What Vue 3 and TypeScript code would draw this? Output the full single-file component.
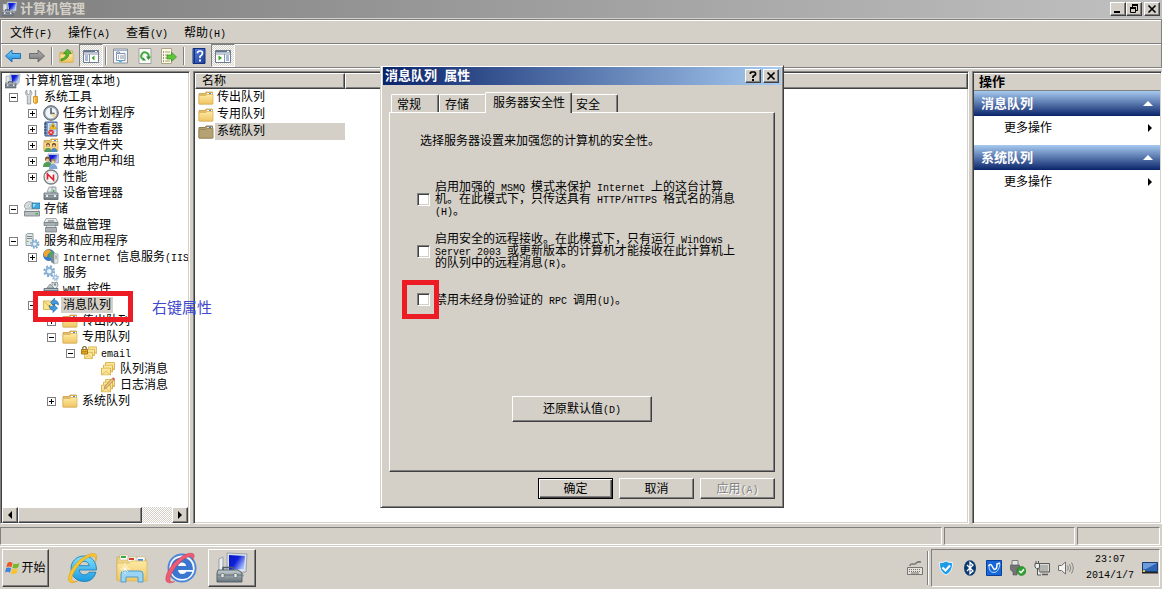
<script setup lang="ts">
import { computed, h, ref, type FunctionalComponent } from 'vue'

interface TreeNode {
  id: string
  level: number
  label: string
  icon: string
  branch?: boolean
}

// Splits a label so that Latin runs can be set in a half-width face
const Mix: FunctionalComponent<{ text: string }> = (props) =>
  h(
    'span',
    { class: 'mix' },
    (props.text.match(/[\x20-\x7e]+|[^\x20-\x7e]+/g) ?? []).map((part) =>
      /^[\x20-\x7e]/.test(part) ? h('span', { class: 'half' }, part) : part,
    ),
  )
Mix.props = ['text']

const Icon: FunctionalComponent<{ name: string; size?: number }> = (props) =>
  h(
    'svg',
    { class: 'icon', width: props.size ?? 16, height: props.size ?? 16, 'aria-hidden': 'true' },
    [h('use', { href: '#i-' + props.name })],
  )
Icon.props = ['name', 'size']

const menus = ['文件(F)', '操作(A)', '查看(V)', '帮助(H)']

const tools = [
  [
    { icon: 'back', label: '后退' },
    { icon: 'forward', label: '前进' },
  ],
  [
    { icon: 'up', label: '向上' },
    { icon: 'panel-left', label: '控制台树', pressed: true },
  ],
  [
    { icon: 'props', label: '属性' },
    { icon: 'refresh', label: '刷新' },
    { icon: 'export', label: '导出' },
  ],
  [
    { icon: 'help', label: '帮助' },
    { icon: 'panel-right', label: '操作窗格', pressed: true },
  ],
]

const nodes: TreeNode[] = [
  { id: 'root', level: 0, label: '计算机管理(本地)', icon: 'computer' },
  { id: 'sys', level: 1, label: '系统工具', icon: 'wrench', branch: true },
  { id: 'task', level: 2, label: '任务计划程序', icon: 'clock', branch: true },
  { id: 'event', level: 2, label: '事件查看器', icon: 'event', branch: true },
  { id: 'share', level: 2, label: '共享文件夹', icon: 'share', branch: true },
  { id: 'users', level: 2, label: '本地用户和组', icon: 'users', branch: true },
  { id: 'perf', level: 2, label: '性能', icon: 'perf', branch: true },
  { id: 'device', level: 2, label: '设备管理器', icon: 'device' },
  { id: 'store', level: 1, label: '存储', icon: 'storage', branch: true },
  { id: 'disk', level: 2, label: '磁盘管理', icon: 'disk' },
  { id: 'svcapp', level: 1, label: '服务和应用程序', icon: 'server', branch: true },
  { id: 'iis', level: 2, label: 'Internet 信息服务(IIS', icon: 'iis', branch: true },
  { id: 'svc', level: 2, label: '服务', icon: 'gears' },
  { id: 'wmi', level: 2, label: 'WMI 控件', icon: 'wmi' },
  { id: 'mq', level: 2, label: '消息队列', icon: 'queue', branch: true },
  { id: 'out', level: 3, label: '传出队列', icon: 'folder', branch: true },
  { id: 'priv', level: 3, label: '专用队列', icon: 'folder', branch: true },
  { id: 'email', level: 4, label: 'email', icon: 'lockmail', branch: true },
  { id: 'qmsg', level: 5, label: '队列消息', icon: 'mails' },
  { id: 'jmsg', level: 5, label: '日志消息', icon: 'journal' },
  { id: 'sysq', level: 3, label: '系统队列', icon: 'folder', branch: true },
]

const open = ref(new Set(['sys', 'store', 'svcapp', 'mq', 'priv', 'email']))
const selectedNode = ref('mq')

const visibleNodes = computed(() => {
  const shown: TreeNode[] = []
  let closedAt = Infinity
  for (const node of nodes) {
    if (node.level > closedAt) continue
    closedAt = node.branch && !open.value.has(node.id) ? node.level : Infinity
    shown.push(node)
  }
  return shown
})

function toggle(id: string) {
  const next = new Set(open.value)
  if (!next.delete(id)) next.add(id)
  open.value = next
}

const queues = ['传出队列', '专用队列', '系统队列']
const selectedQueue = ref('系统队列')

const actionGroups = ['消息队列', '系统队列']

const tabs = ['常规', '存储', '服务器安全性', '安全']
const activeTab = ref('服务器安全性')

const options = ref([
  {
    id: 'harden',
    on: false,
    lines: ['启用加强的 MSMQ 模式来保护 Internet 上的这台计算', '机。在此模式下，只传送具有 HTTP/HTTPS 格式名的消息', '(H)。'],
  },
  {
    id: 'remote',
    on: false,
    lines: ['启用安全的远程接收。在此模式下，只有运行 Windows', 'Server 2003 或更新版本的计算机才能接收在此计算机上', '的队列中的远程消息(R)。'],
  },
  { id: 'rpc', on: false, lines: ['禁用未经身份验证的 RPC 调用(U)。'] },
])

const trayIcons = ['shield', 'bluetooth', 'sync', 'usb', 'network', 'sound']
</script>

<template>
  <div class="desktop">
    <svg class="sprite" aria-hidden="true">
      <defs>
        <linearGradient id="g-folder" x1="0" y1="0" x2="0" y2="1"><stop offset="0" stop-color="#fdeaa4" /><stop offset="1" stop-color="#f0c562" /></linearGradient>
        <linearGradient id="g-screen" x1="0" y1="0" x2="1" y2="0.6"><stop offset="0" stop-color="#0a18c8" /><stop offset="0.5" stop-color="#1020d8" /><stop offset="1" stop-color="#a8c0ff" /></linearGradient>
        <linearGradient id="g-blue" x1="0" y1="0" x2="0" y2="1"><stop offset="0" stop-color="#7fd4fa" /><stop offset="1" stop-color="#1a86d8" /></linearGradient>
        <linearGradient id="g-gray" x1="0" y1="0" x2="0" y2="1"><stop offset="0" stop-color="#b4b4b4" /><stop offset="1" stop-color="#747474" /></linearGradient>
        <linearGradient id="g-metal" x1="0" y1="0" x2="0" y2="1"><stop offset="0" stop-color="#c6ced2" /><stop offset="1" stop-color="#66727a" /></linearGradient>
        <linearGradient id="g-help" x1="0" y1="0" x2="1" y2="1"><stop offset="0" stop-color="#5a86e0" /><stop offset="1" stop-color="#1a3a9c" /></linearGradient>
        <linearGradient id="g-ie" x1="0" y1="0" x2="0" y2="1"><stop offset="0" stop-color="#7fe0fc" /><stop offset="1" stop-color="#1c9ae0" /></linearGradient>
      </defs>

      <symbol id="i-folder" viewBox="0 0 16 16">
        <path d="M1 3.5h6l1-1.500h6.500v12H1z" fill="#e2bb62" stroke="#c9a04c" stroke-width=".8" />
        <path d="M9 3h5v2H9z" fill="#fff" /><path d="M11 3h2v1h-2z" fill="#3a8ad8" />
        <path d="M1 5.500h7l1-1h6v9.500H1z" fill="url(#g-folder)" stroke="#dcb45c" stroke-width=".8" />
      </symbol>
      <symbol id="i-folder-dim" viewBox="0 0 16 16">
        <path d="M1 3.500h6l1-1.500h6.500v12H1z" fill="#b09c6c" stroke="#8e7c50" />
        <path d="M9 3h5v2H9z" fill="#ddd" /><path d="M11 3h2v1h-2z" fill="#3a7ab8" />
        <path d="M1 5.500h7l1-1h6v9.500H1z" fill="#b5a272" stroke="#9a875a" />
      </symbol>
      <symbol id="i-computer" viewBox="0 0 16 16">
        <path d="M1 3h4v9H1z" fill="#dfe4e4" stroke="#8c9698" stroke-width=".6" />
        <path d="M5 1h10l-1 9H6z" fill="#d8dde6" stroke="#98a0ac" stroke-width=".7" />
        <path d="M6.200 2h7.700l-.8 6.800H7z" fill="url(#g-screen)" />
        <path d="M8 10h4l1 2H8z" fill="#aab2b8" />
        <path d="M0 10h11v5H0z" fill="url(#g-metal)" stroke="#59646a" stroke-width=".6" />
        <path d="M3.500 10V8.700h4V10M0 12h11" fill="none" stroke="#445" stroke-width=".8" />
        <path d="M2 11.500h1.400v1.400H2zM8 11.500h1.400v1.400H8z" fill="#eef" />
      </symbol>
      <symbol id="i-wrench" viewBox="0 0 16 16">
        <path d="M3 1v3.500L4.500 5.500 6 4.500V1c2 1 2.600 4 .7 5.800V15H3.300V7C.8 5 1.200 2 3 1z" fill="#d4d8da" stroke="#7e878b" stroke-width=".7" />
        <path d="M10.800 1h1.400v6.500h-1.400z" fill="#999" />
        <path d="M9.500 7.500h4v6q-2 2.500-4 0z" fill="#f4b22a" stroke="#c27c10" stroke-width=".7" /><path d="M10.500 8.500v5" stroke="#ffe48c" />
      </symbol>
      <symbol id="i-clock" viewBox="0 0 16 16">
        <circle cx="8" cy="8" r="7.300" fill="#9aa2aa" stroke="#596470" /><circle cx="8" cy="8" r="5.600" fill="#eef4fb" />
        <path d="M8 3v5.500h3.500" fill="none" stroke="#333b48" stroke-width="1.300" /><path d="M8 8.500l5 .5a5 5 0 0 1-3 3.800z" fill="#f4d79c" />
      </symbol>
      <symbol id="i-event" viewBox="0 0 16 16">
        <path d="M2 1h12v14H2z" fill="#7c9cd0" stroke="#415c92" /><path d="M5 2h8.500v12H5z" fill="#d5e2f5" />
        <path d="M6 4h6M6 6h6M6 8h6M6 10h6" stroke="#8ea9d5" stroke-width=".8" />
        <path d="M1 3h2.500M1 6h2.500M1 9h2.500M1 12h2.500" stroke="#333" />
        <path d="M10 2l3.500 6h-7z" fill="#ffc91c" stroke="#b78300" stroke-width=".5" /><path d="M10 4v2.500" stroke="#333" stroke-width=".9" />
        <circle cx="8" cy="11.500" r="2.800" fill="#dc3030" /><path d="M7 10.500l2 2m0-2l-2 2" stroke="#fff" stroke-width=".9" />
      </symbol>
      <symbol id="i-share" viewBox="0 0 16 16">
        <use href="#i-folder" />
        <circle cx="5" cy="8" r="2" fill="#7b4a22" /><circle cx="11" cy="8" r="2" fill="#5c3518" /><circle cx="5" cy="8.700" r="1.300" fill="#efc296" /><circle cx="11" cy="8.700" r="1.300" fill="#efc296" />
        <path d="M1.500 15q0-4 3.500-4t3.500 4z" fill="#4d9c64" /><path d="M8 15q0-4 3-4t3.500 4z" fill="#4d87c2" />
      </symbol>
      <symbol id="i-users" viewBox="0 0 16 16">
        <path d="M5 1h10.500v9H6z" fill="#ccd6ec" stroke="#8493b6" stroke-width=".7" /><path d="M6 2h8.500v7H7z" fill="url(#g-screen)" />
        <circle cx="4.500" cy="6" r="2.500" fill="#7b5128" /><circle cx="4.500" cy="7" r="1.600" fill="#efc296" /><circle cx="10" cy="8" r="2.300" fill="#b07a34" /><circle cx="10" cy="9" r="1.500" fill="#f2cda2" />
        <path d="M0 14q0-5 4.500-5T9 14z" fill="#4f9d55" /><path d="M6 16q0-5 4-5t4.500 5z" fill="#7fa6d6" />
      </symbol>
      <symbol id="i-perf" viewBox="0 0 16 16">
        <circle cx="8" cy="8" r="7" fill="#fff" stroke="#777f84" stroke-width="1.300" /><circle cx="8" cy="8" r="5.300" fill="none" stroke="#c8cdd0" stroke-width=".7" />
        <path d="M4.500 10.500V5l6 6V5.500" fill="none" stroke="#e0202c" stroke-width="1.700" />
      </symbol>
      <symbol id="i-device" viewBox="0 0 16 16">
        <path d="M4 7l2-5h5l2 5z" fill="#e3e8e9" stroke="#8a9498" stroke-width=".7" /><path d="M9 2h4v6H9z" fill="#d6dcde" stroke="#7d888c" stroke-width=".7" /><path d="M10 5h1.500v2H10z" fill="#3eb54a" />
        <path d="M1 8h14v6.500H1z" fill="url(#g-metal)" stroke="#59646a" stroke-width=".8" /><path d="M1 10.500h14" stroke="#6a757b" stroke-width=".7" /><path d="M3 10h2v2H3zm8 0h2v2h-2z" fill="#e5eaec" />
      </symbol>
      <symbol id="i-storage" viewBox="0 0 16 16">
        <ellipse cx="5.500" cy="5" rx="5" ry="4.300" fill="#d9dfe1" stroke="#8a9498" stroke-width=".8" /><circle cx="5.500" cy="5" r="1.300" fill="#fff" stroke="#999" stroke-width=".6" />
        <path d="M8 2h8v5.500H8z" fill="#3fa8dc" stroke="#23749c" stroke-width=".7" /><path d="M9 3h3l-2 3H9z" fill="#9fdcf6" />
        <path d="M2 8h12l1.500 2.500H.5z" fill="#eef0f0" stroke="#868f93" stroke-width=".6" /><path d="M.5 10.500h15V15H.5z" fill="#b8bec1" stroke="#717a7e" stroke-width=".8" /><path d="M11.500 12h2.500v1.500h-2.500z" fill="#3eb54a" />
      </symbol>
      <symbol id="i-disk" viewBox="0 0 16 16">
        <path d="M3 1.500h10l2 4H1z" fill="#e6e9ea" stroke="#8a9296" stroke-width=".7" /><path d="M1 5.500h14v3H1z" fill="#a9b1b5" stroke="#6d767b" stroke-width=".7" /><path d="M12 7h1.500" stroke="#3eb54a" />
        <path d="M4 8.500h8l1 2H3z" fill="#dfe3e4" stroke="#8a9296" stroke-width=".6" /><path d="M2.500 10.500h11V15h-11z" fill="#a9b1b5" stroke="#6d767b" stroke-width=".7" /><path d="M5 4h6" stroke="#777" />
      </symbol>
      <symbol id="i-gear-shape" viewBox="0 0 12 12">
        <circle cx="6" cy="6" r="4.700" fill="none" stroke="#7fa9cf" stroke-width="2" stroke-dasharray="2 1.700" /><circle cx="6" cy="6" r="3.100" fill="#eaf3fb" stroke="#8ab0d4" stroke-width="1.800" />
      </symbol>
      <symbol id="i-server" viewBox="0 0 16 16">
        <path d="M2 1.500L4 .5h5v12H2z" fill="#e2e6e7" stroke="#808b90" stroke-width=".8" /><path d="M3 3.500h5M3 5.500h5" stroke="#7c878d" /><path d="M3 8h1.500v1H3z" fill="#3eb54a" />
        <use href="#i-gear-shape" x="5.500" y="6" width="10.500" height="10" />
      </symbol>
      <symbol id="i-gears" viewBox="0 0 16 16">
        <use href="#i-gear-shape" x="0" y="0" width="12.500" height="12.500" /><use href="#i-gear-shape" x="9" y="9" width="7" height="7" />
      </symbol>
      <symbol id="i-iis" viewBox="0 0 16 16">
        <circle cx="6" cy="6" r="5.600" fill="#2f7cd0" stroke="#1c569c" stroke-width=".6" /><path d="M.5 4Q2.500.5 6 .5l2.500 2L5 5 4 8 1 7.500z" fill="#f2a431" /><path d="M6 4l4-2q1 4-2 7.500L6 8z" fill="#46ac48" />
        <path d="M8 5l3-1v11l-3-2z" fill="#7d888e" /><path d="M11 4l4 1v9l-4 1z" fill="#dfe4e5" stroke="#899397" stroke-width=".5" /><path d="M12 7l2 .3M12 9l2 .2" stroke="#6d777b" stroke-width=".7" />
      </symbol>
      <symbol id="i-wmi" viewBox="0 0 16 16">
        <path d="M9 1l2 1 3-1 1 3-2 4H9z" fill="#e9eced" stroke="#727c81" stroke-width=".8" /><circle cx="12" cy="3.500" r="1.200" fill="#808b90" />
        <path d="M4 7l3-4 4 4z" fill="#bfc7ca" stroke="#727c81" stroke-width=".7" /><path d="M1 7.500h14V14H1z" fill="url(#g-metal)" stroke="#59646a" stroke-width=".8" /><path d="M1 10h14" stroke="#454f55" /><path d="M10 9h3v3h-3z" fill="#3f8fd4" />
      </symbol>
      <symbol id="i-queue" viewBox="0 0 16 16">
        <path d="M.5 4h11v8.500H.5z" fill="#fbe38c" stroke="#dcb858" /><path d="M.5 4l5.500 5 5.500-5" fill="none" stroke="#dcb858" />
        <path d="M7.500 5.500l4-4.500v2.500q4 0 4 4.500-1.500-1.500-4-1.300V9.500z" fill="#3f9ae0" stroke="#1a5ea0" stroke-width=".6" /><path d="M14.500 11l-4.500 4.500V13q-3.500 0-4-4.500 1.500 1.500 4 1.300V7z" fill="#3f9ae0" stroke="#1a5ea0" stroke-width=".6" />
      </symbol>
      <symbol id="i-env" viewBox="0 0 10 8">
        <path d="M.5 .5h9v7h-9z" fill="#fbe596" stroke="#d8b04c" stroke-width=".9" /><path d="M.5 7.500L5 3.800l4.500 3.700" fill="none" stroke="#dcb858" stroke-width=".8" />
      </symbol>
      <symbol id="i-mails" viewBox="0 0 16 16">
        <use href="#i-env" x="5" y="1" width="10" height="8" /><use href="#i-env" x="3" y="3.500" width="10" height="8" /><use href="#i-env" x="1" y="6.500" width="10" height="8" />
      </symbol>
      <symbol id="i-journal" viewBox="0 0 16 16">
        <use href="#i-mails" y="1" width="16" height="16" /><path d="M5 9l7-7.500 2 1.500-7 7.500-2.800 1z" fill="#f0c078" stroke="#8c7448" stroke-width=".6" /><path d="M12 1.500L13.200.3l2 1.600L14 3z" fill="#d25a5a" />
      </symbol>
      <symbol id="i-lockmail" viewBox="0 0 16 16">
        <use href="#i-env" x="7" y="1" width="9" height="8" /><use href="#i-env" x="5" y="3.500" width="9" height="8" /><use href="#i-env" x="3" y="6.500" width="9" height="8" />
        <path d="M1.800 4.500V2.500q1.700-2 3.400 0v2" fill="none" stroke="#77642c" stroke-width="1.200" /><path d="M.5 4.500h6V9h-6z" fill="#e8ac1c" stroke="#8d6510" stroke-width=".8" /><path d="M1 6.700h5" stroke="#9d7410" stroke-width=".7" />
      </symbol>

      <symbol id="i-back" viewBox="0 0 16 16"><path d="M.5 8L7 2v3.500h8.500v5H7V14z" fill="url(#g-blue)" stroke="#1468b0" stroke-width=".9" /></symbol>
      <symbol id="i-forward" viewBox="0 0 16 16"><path d="M15.500 8L9 2v3.500H.5v5H9V14z" fill="url(#g-gray)" stroke="#666" stroke-width=".9" /></symbol>
      <symbol id="i-up" viewBox="0 0 16 16"><use href="#i-folder" y="1" width="15" height="15" /><path d="M2 11q5-1 5-5.500H4.500L8.500 1l4 4.500H10Q10 11 2 13z" fill="#52b92c" stroke="#2b7c14" stroke-width=".6" /></symbol>
      <symbol id="i-panel-left" viewBox="0 0 16 16">
        <path d="M.5 2.500h15v12H.5z" fill="#fff" stroke="#6e7c92" /><path d="M1 3h14v1.500H1z" fill="#64748c" /><path d="M1 6h14M6.500 6v8" stroke="#8997ad" /><path d="M2 8h3M2 10h3M2 12h3" stroke="#4f78b8" /><path d="M11.500 7.500v5L8.500 10z" fill="#35a528" /><path d="M12 3.500h2" stroke="#fff" />
      </symbol>
      <symbol id="i-panel-right" viewBox="0 0 16 16">
        <path d="M.5 2.500h15v12H.5z" fill="#fff" stroke="#6e7c92" /><path d="M1 3h14v1.500H1z" fill="#64748c" /><path d="M1 6h14M9.500 6v8" stroke="#8997ad" /><path d="M11 8h3M11 10h3M11 12h3" stroke="#4f78b8" /><path d="M3.500 7.500v5l3.500-2.500z" fill="#35a528" /><path d="M12 3.500h2" stroke="#fff" />
      </symbol>
      <symbol id="i-props" viewBox="0 0 16 16">
        <path d="M.5 1h14v14H.5z" fill="#f4f6f9" stroke="#8b9099" /><path d="M1 1.500h13v1.500H1z" fill="#a4b2c8" /><path d="M3.500 5.500h8.500v7H3.500z" fill="#fff" stroke="#7d92b4" /><path d="M3.500 5v-1h3v1.500" fill="none" stroke="#7d92b4" />
        <path d="M5 8h1M5 10h1" stroke="#3a6cc0" /><path d="M7 8h4M7 10h4" stroke="#8b9099" /><path d="M6 13.500h3" stroke="#3cc2ea" stroke-width="1.500" />
      </symbol>
      <symbol id="i-refresh" viewBox="0 0 16 16">
        <path d="M2 .5h12v15H2z" fill="#fafafa" stroke="#a0a09a" /><path d="M5.700 11A3.700 3.700 0 1 1 11.500 9" fill="none" stroke="#3cab3c" stroke-width="1.900" /><path d="M9 8.500h5l-2.500 3.500zM5 12.500l1.500-3 2.500 3z" fill="#2b962b" />
      </symbol>
      <symbol id="i-export" viewBox="0 0 16 16">
        <path d="M.5 .5h10v15H.5z" fill="#fffbe0" stroke="#aaa58c" /><path d="M2 4h1M2 7h1M2 10h1M2 13h1" stroke="#333" /><path d="M4 4h5M4 7h3M4 10h3M4 13h5" stroke="#a29c84" /><path d="M6 7h4.500V4.200L15.500 9l-5 4.500V11H6z" fill="#5cc738" stroke="#318c1c" stroke-width=".7" />
      </symbol>
      <symbol id="i-help" viewBox="0 0 16 16">
        <path d="M2 .5h12v15H2z" fill="url(#g-help)" stroke="#16307c" /><path d="M3.500 1v14" stroke="#16307c" /><path d="M6.500 5.300Q6.500 3 9 3t2.500 2.300Q11.500 7 9 8.500V10" fill="none" stroke="#fff" stroke-width="1.700" /><path d="M8 11.500h2v2H8z" fill="#fff" />
      </symbol>

      <symbol id="i-flag" viewBox="0 0 16 16">
        <path d="M2.500 3q2.500-2 5 0L6.400 7.300q-2.500-1.700-5 0z" fill="#ee5426" /><path d="M8.500 3.400q3 1.600 6-.4l-1.400 4.500q-2.800 1.700-5.700.2z" fill="#78b92c" /><path d="M1.100 8.300q2.500-1.700 5 0L5 12.700q-2.500-1.700-5 0z" fill="#3a84dc" /><path d="M7.100 8.800q3 1.500 5.800-.2l-1.300 4.500q-2.800 1.700-5.700.2z" fill="#fbc22c" />
      </symbol>
      <symbol id="i-ie" viewBox="0 0 32 32">
        <path fill-rule="evenodd" d="M17 4c7.500 0 12.500 5.500 12.500 14H12.300c.4 3 2.200 4.800 5 4.800 2.300 0 3.800-1 4.800-2.600h6.800C27.400 26 23.300 29.500 17.300 29.500 9.800 29.500 4 24.500 4 16.700 4 9.200 9.700 4 17 4zm-4.600 9.700h9.800c-.5-2.800-2.200-4.300-4.800-4.300s-4.400 1.500-5 4.300z" fill="url(#g-ie)" stroke="#1278b8" stroke-width=".8" />
        <path d="M28.500 10C31.500 3 29 .3 23 2 13 5 1.500 18 1.500 27c0 4 4 4.800 9 2-4 1.200-6 .3-5.700-2.700C5.500 19.500 15 7.500 23 4.600c4-1.200 6.500 0 5.500 5.400z" fill="#fac42c" stroke="#d7960c" stroke-width=".5" />
      </symbol>
      <symbol id="i-ie-red" viewBox="0 0 32 32">
        <circle cx="17" cy="16" r="14.500" fill="#4a87d8" /><circle cx="17" cy="16" r="12.600" fill="#f7faff" />
        <path fill-rule="evenodd" d="M17 5.500c6.500 0 11 4.700 11 12.500H13c.4 2.500 1.900 4 4.200 4 2 0 3.200-.8 4-2.200h6C26 24.500 22.500 27 17.200 27 10.500 27 6 22.500 6 16.300 6 10 10.500 5.500 17 5.500zM13 14h8.200c-.4-2.300-1.900-3.600-4-3.600S13.500 11.700 13 14z" fill="#3a76d0" />
        <path d="M27.500 8C31 2.500 29 .3 23 1.500 13 4.500 .8 18 .8 27c0 4 4 5 9 2.500-3.500 1-5 .2-4.800-2.700C5.700 20 15 8 23 5c3.300-1.200 5-.4 4.500 3z" fill="#ee5c74" stroke="#c22c48" stroke-width=".4" />
      </symbol>
      <symbol id="i-explorer" viewBox="0 0 32 32">
        <path d="M1 5h10l1 2h18v21H1z" fill="#f0d684" stroke="#c8a656" stroke-width=".8" /><path d="M4 3h8v5H4zM12 5h9v5h-9zM20 5h9v5h-9z" fill="#fff" stroke="#c8b27a" stroke-width=".6" /><path d="M5 4h5v2H5z" fill="#36a844" /><path d="M13 6h5v2h-5z" fill="#d83c2c" /><path d="M22 7h5v2h-5z" fill="#3a8ce0" />
        <path d="M1 11h12l2-2h16v20H1z" fill="url(#g-folder)" stroke="#dcb864" stroke-width=".8" /><path d="M5 30V22q0-3 3-3h16q3 0 3 3v8h-5v-5H10v5z" fill="#9ad4f4" stroke="#4f9ccc" /><path d="M9 11v11M4 17h10M6 14l6 6m0-6l-6 6" stroke="#fff" stroke-width=".7" />
      </symbol>
      <symbol id="i-toolbox" viewBox="0 0 32 32">
        <path d="M3 7l4-2v16H3z" fill="#eef1f2" stroke="#97a0a6" /><path d="M11 1l20 1-1 18-19 1z" fill="#dbe1e8" stroke="#98a1ac" /><path d="M13 3l16 1-1 13-15 1z" fill="url(#g-screen)" /><path d="M20 20h5l3 4h-8z" fill="#bcc4c8" stroke="#8b949a" stroke-width=".6" />
        <path d="M7 18v-2.500h10V18" fill="none" stroke="#4f5c64" stroke-width="1.500" /><path d="M2 18h20l4 3v9H1v-9z" fill="url(#g-metal)" stroke="#54626a" /><path d="M1 23h25" stroke="#5f6c73" /><path d="M5 21.500h3v4H5zm13 0h3v4h-3z" fill="#e8edf0" stroke="#59666d" stroke-width=".6" />
      </symbol>

      <symbol id="i-keyboard" viewBox="0 0 16 16">
        <path d="M.5 7.500h15v7H.5z" fill="#e5e2dc" stroke="#77756f" /><path d="M2 9.500h12M2 11.500h12" stroke="#77756f" stroke-dasharray="1 1" /><path d="M4 13h8" stroke="#77756f" /><path d="M3 6q0-2.500 3-2t3-1q2-1.500 5-1" fill="none" stroke="#77756f" stroke-width="1.500" />
      </symbol>
      <symbol id="i-shield" viewBox="0 0 16 16">
        <path d="M8 1q3 2 6.500 1.500Q15 11.500 8 15 1 11.500 1.500 2.500 5 3 8 1z" fill="#1f9be6" stroke="#e9f6ff" /><path d="M4.500 7.500l3 3 4.500-5" fill="none" stroke="#fff" stroke-width="2" />
      </symbol>
      <symbol id="i-bluetooth" viewBox="0 0 16 16">
        <ellipse cx="8" cy="8" rx="6" ry="7.800" fill="#0d3a72" /><path d="M5 5l6 6-3 2.500v-11L11 5l-6 6" fill="none" stroke="#fff" stroke-width="1.300" />
      </symbol>
      <symbol id="i-sync" viewBox="0 0 16 16">
        <path d="M.5 .5h15v15H.5z" fill="#1668d8" stroke="#0c3f9c" /><path d="M2.500 6q2-3 3.500 0t2.500 3.500Q11 9.500 11 4l3-1" fill="none" stroke="#fff" stroke-width="1.500" /><path d="M3 6q0 6.500 5 6.500 4.500 0 6-8.500" fill="none" stroke="#b8dcff" />
      </symbol>
      <symbol id="i-usb" viewBox="0 0 16 16">
        <path d="M2 .5h6v5H2z" fill="#e3e3e3" stroke="#808080" /><path d="M.5 5h9v5l-2.500 2v3H3v-3L.5 10z" fill="#747474" stroke="#505050" stroke-width=".6" /><circle cx="11.500" cy="11" r="4.400" fill="#2fa232" stroke="#17701a" stroke-width=".6" /><path d="M9.300 11l1.700 1.700 3-3.500" fill="none" stroke="#fff" stroke-width="1.500" />
      </symbol>
      <symbol id="i-network" viewBox="0 0 16 16">
        <path d="M5 3.500h10.500v8.500H5z" fill="#b4b4b0" stroke="#5c5c5c" /><path d="M6 4.500h8.500V11" fill="none" stroke="#eee" stroke-width=".7" /><path d="M8 14.500h6" stroke="#5c5c5c" stroke-width="1.500" /><path d="M1 3.500h4.500V7L4.500 8.500h-2L1 7zM2 1v2.500M4.500 1v2.500M3.500 8.500V15H7" fill="#eee" stroke="#555" />
      </symbol>
      <symbol id="i-sound" viewBox="0 0 16 16">
        <path d="M.5 5.500h3L7.500 2v12l-4-3.500h-3z" fill="#f2f2f2" stroke="#707070" /><path d="M9.500 5.500q1.500 2.500 0 5M11.500 4q2.500 4 0 8M13.500 2.500q3.500 5.500 0 11" fill="none" stroke="#858585" />
      </symbol>
      <symbol id="i-desktop" viewBox="0 0 16 16"><path d="M.5 2.500h15v9H.5z" fill="#2c64b4" stroke="#1b3d70" /><path d="M1 3h14L4 9H1z" fill="#6d9cdc" /><path d="M0 12h16v1.500H0z" fill="#222" /><path d="M1 10h2v2H1z" fill="#f6c42c" /></symbol>
      <symbol id="i-min" viewBox="0 0 12 10"><path d="M2 8h6" stroke="#000" stroke-width="2" /></symbol>
      <symbol id="i-restore" viewBox="0 0 12 10"><path d="M4.500 3V.5h5v6H8" fill="none" stroke="#000" /><path d="M4 1h6" stroke="#000" stroke-width="2" /><path d="M2.500 3.500h5v5h-5z" fill="none" stroke="#000" /><path d="M2 4h6" stroke="#000" stroke-width="2" /></symbol>
      <symbol id="i-close" viewBox="0 0 12 10"><path d="M2.500 1.500l7 7m0-7l-7 7" stroke="#000" stroke-width="1.700" /></symbol>
      <symbol id="i-query" viewBox="0 0 12 10"><path d="M3.500 3V1.500L4.500 1h3l1 1v1.500L6 5.500V7" fill="none" stroke="#000" stroke-width="1.700" /><path d="M5 8h2v2H5z" /></symbol>
    </svg>

    <main class="window">
      <header class="titlebar">
        <Icon name="computer" />
        <h1>计算机管理</h1>
        <div class="captions">
          <button class="raised" aria-label="最小化"><svg class="glyph"><use href="#i-min" /></svg></button>
          <button class="raised" aria-label="还原"><svg class="glyph"><use href="#i-restore" /></svg></button>
          <button class="raised apart" aria-label="关闭"><svg class="glyph"><use href="#i-close" /></svg></button>
        </div>
      </header>

      <nav class="band menubar">
        <button v-for="menu in menus" :key="menu"><Mix :text="menu" /></button>
      </nav>

      <div class="band toolbar">
        <div v-for="(group, g) in tools" :key="g" class="toolgroup">
          <button v-for="tool in group" :key="tool.icon" :class="{ pressed: tool.pressed }" :aria-label="tool.label">
            <Icon :name="tool.icon" />
          </button>
        </div>
      </div>

      <div class="panes">
        <section class="pane treepane">
          <ul class="tree">
            <li v-for="node in visibleNodes" :key="node.id" :class="'level' + node.level">
              <button v-if="node.branch" class="expander" :class="{ closed: !open.has(node.id) }" :aria-label="node.label" @click="toggle(node.id)"></button>
              <span v-else-if="node.level" class="expander-gap"></span>
              <Icon :name="node.icon" />
              <button class="nodelabel" :class="{ selected: node.id === selectedNode }" @click="selectedNode = node.id"><Mix :text="node.label" /></button>
            </li>
          </ul>
          <div class="scrollbar">
            <button class="raised" aria-label="向左滚动"><span class="arrow left"></span></button>
            <span class="raised thumb"></span>
            <span class="track"></span>
            <button class="raised" aria-label="向右滚动"><span class="arrow right"></span></button>
          </div>
        </section>

        <section class="pane">
          <table class="list">
            <thead>
              <tr><th class="namecol">名称</th><th></th></tr>
            </thead>
            <tbody>
              <tr v-for="queue in queues" :key="queue" @click="selectedQueue = queue">
                <td>
                  <div class="queue">
                    <Icon :name="queue === selectedQueue ? 'folder-dim' : 'folder'" />
                    <span :class="{ selected: queue === selectedQueue }">{{ queue }}</span>
                  </div>
                </td>
                <td></td>
              </tr>
            </tbody>
          </table>
        </section>

        <aside class="pane actions">
          <h2>操作</h2>
          <template v-for="group in actionGroups" :key="group">
            <button class="grouphead">{{ group }}<span class="arrow up"></span></button>
            <button class="more">更多操作<span class="arrow right"></span></button>
          </template>
        </aside>
      </div>

      <footer class="status"><span></span><span></span><span></span></footer>
    </main>

    <section class="dialog" role="dialog" aria-labelledby="dialog-title">
      <header class="dialogbar">
        <h2 id="dialog-title">消息队列&nbsp; 属性</h2>
        <div class="captions">
          <button class="raised" aria-label="帮助"><svg class="glyph"><use href="#i-query" /></svg></button>
          <button class="raised apart" aria-label="关闭"><svg class="glyph"><use href="#i-close" /></svg></button>
        </div>
      </header>
      <div class="tabs" role="tablist">
        <button v-for="tab in tabs" :key="tab" role="tab" :aria-selected="tab === activeTab" :class="{ active: tab === activeTab }" @click="activeTab = tab">{{ tab }}</button>
      </div>
      <div class="page" role="tabpanel">
        <p>选择服务器设置来加强您的计算机的安全性。</p>
        <div v-for="option in options" :key="option.id" class="option">
          <input :id="option.id" v-model="option.on" type="checkbox" />
          <label :for="option.id"><Mix v-for="line in option.lines" :key="line" :text="line" /></label>
        </div>
        <button class="raised restore"><Mix text="还原默认值(D)" /></button>
      </div>
      <footer class="buttons">
        <button class="raised default">确定</button>
        <button class="raised">取消</button>
        <button class="raised" disabled><Mix text="应用(A)" /></button>
      </footer>
    </section>

    <div class="mark mark-node"></div>
    <div class="mark mark-check"></div>
    <span class="note">右键属性</span>

    <footer class="taskbar">
      <button class="raised start"><Icon name="flag" />开始</button>
      <button class="launch" aria-label="Internet Explorer"><Icon name="ie" :size="32" /></button>
      <button class="launch" aria-label="资源管理器"><Icon name="explorer" :size="32" /></button>
      <button class="launch" aria-label="浏览器"><Icon name="ie-red" :size="32" /></button>
      <button class="raised running" aria-label="计算机管理"><Icon name="toolbox" :size="32" /></button>
      <span class="ime"><Icon name="keyboard" /></span>
      <div class="tray">
        <Icon v-for="name in trayIcons" :key="name" :name="name" />
        <time><span>23:07</span><span>2014/1/7</span></time>
        <Icon name="desktop" />
      </div>
    </footer>
  </div>
</template>

<style>
html,
body {
  margin: 0;
}
.mix {
  white-space: pre;
}
.half {
  font-family: 'Liberation Mono', monospace;
  font-size: 10px;
  line-height: 0;
}
.icon {
  display: block;
  flex: none;
}
</style>

<style scoped>
.desktop {
  position: relative;
  display: flex;
  flex-direction: column;
  min-height: 100vh;
  overflow: hidden;
  background: #d4d0c8;
  color: #000;
  font: 12px/16px 'Liberation Sans', 'Noto Sans CJK SC', sans-serif;
}
.sprite {
  position: absolute;
  width: 0;
  height: 0;
}
button {
  display: flex;
  align-items: center;
  justify-content: center;
  box-sizing: border-box;
  margin: 0;
  padding: 0;
  border: 0;
  background: none;
  color: inherit;
  font: inherit;
  white-space: nowrap;
}
h1,
h2,
p {
  margin: 0;
  font-size: 13px;
}
.raised {
  border: 1px solid;
  border-color: #fff #404040 #404040 #fff;
  background: #d4d0c8;
  box-shadow: inset -1px -1px #808080;
}
.window {
  display: flex;
  flex: 1;
  flex-direction: column;
}
.titlebar {
  display: flex;
  align-items: center;
  height: 18px;
  padding: 0 2px;
  background: linear-gradient(90deg, #808080, #c0c0c0);
  color: #d4d0c8;
}
.titlebar h1 {
  flex: 1;
  margin-left: 2px;
}
.captions {
  display: flex;
}
.captions button {
  width: 16px;
  height: 14px;
}
.captions .apart {
  margin-left: 2px;
}
.glyph {
  width: 12px;
  height: 10px;
}
.band {
  display: flex;
  box-sizing: border-box;
  height: 25px;
  border: 1px solid #808080;
  box-shadow: inset 1px 1px #fff, 0 1px #fff;
}
.menubar {
  margin-top: 1px;
  padding: 2px 0 0 1px;
}
.menubar button {
  padding: 0 8px;
}
.toolbar {
  margin-top: -1px;
}
.toolgroup {
  display: flex;
  align-items: center;
}
.toolgroup button {
  width: 24px;
  height: 23px;
}
.toolgroup + .toolgroup::before {
  width: 1px;
  height: 18px;
  margin: 0 2px;
  border-left: 1px solid #808080;
  background: #fff;
  content: '';
}
.toolgroup .pressed {
  border: 1px solid;
  border-color: #808080 #fff #fff #808080;
  background: repeating-conic-gradient(#fff 0 25%, #d4d0c8 0 50%) 0 0 / 2px 2px;
}
.panes {
  display: grid;
  flex: 1;
  grid-template-columns: 190px 1fr 190px;
  gap: 3px;
  margin-top: 3px;
}
.pane {
  min-width: 0;
  overflow: hidden;
  border: 1px solid;
  border-color: #808080 #fff #fff #808080;
  padding: 1px 0 0 1px;
  background: #fff;
  box-shadow: inset 1px 1px #404040, inset -1px -1px #d4d0c8;
}
.treepane {
  display: flex;
  flex-direction: column;
}
.tree {
  flex: 1;
  margin: 0 1px 0 0;
  padding: 0;
  overflow: hidden;
  list-style: none;
}
.tree li {
  display: flex;
  align-items: center;
  height: 16px;
}
.level0 {
  padding-left: 3px;
}
.level1 {
  padding-left: 7px;
}
.level2 {
  padding-left: 26px;
}
.level3 {
  padding-left: 45px;
}
.level4 {
  padding-left: 64px;
}
.level5 {
  padding-left: 83px;
}
.expander,
.expander-gap {
  flex: none;
  width: 9px;
  height: 9px;
  margin-right: 6px;
}
.expander {
  border: 1px solid #808080;
  background: linear-gradient(#000, #000) center / 5px 1px no-repeat;
}
.expander.closed {
  background: linear-gradient(#000, #000) center / 5px 1px no-repeat, linear-gradient(#000, #000) center / 1px 5px no-repeat;
}
.nodelabel {
  height: 16px;
  margin-left: 2px;
  padding: 0 2px;
}
.selected {
  background: #d4d0c8;
}
.scrollbar {
  display: flex;
  height: 16px;
  margin: 0 1px 0 0;
}
.scrollbar button {
  width: 16px;
}
.thumb {
  flex: 4;
}
.track {
  flex: 1;
  background: repeating-conic-gradient(#fff 0 25%, #d4d0c8 0 50%) 0 0 / 2px 2px;
}
.arrow {
  width: 0;
  height: 0;
  border: 4px solid transparent;
}
.arrow.left {
  border-right-color: #000;
  border-left-width: 0;
}
.arrow.right {
  border-right-width: 0;
  border-left-color: #000;
}
.arrow.up {
  border-width: 0 5px 5px;
  border-bottom-color: #fff;
}
.list {
  width: 100%;
  border-collapse: separate;
  border-spacing: 0;
  table-layout: fixed;
}
.list th {
  height: 14px;
  padding: 0 0 0 6px;
  border: 1px solid;
  border-color: #fff #404040 #404040 #fff;
  background: #d4d0c8;
  box-shadow: inset -1px -1px #808080;
  font-weight: 400;
  line-height: 14px;
  text-align: left;
}
.list .namecol {
  width: 142px;
}
.list td {
  height: 17px;
  padding: 0;
}
.queue {
  display: flex;
  align-items: center;
  padding-left: 3px;
  line-height: 17px;
}
.queue span {
  flex: 1;
  margin-left: 1px;
  padding-left: 2px;
}
.actions h2 {
  height: 16px;
  margin-right: 1px;
  padding-left: 5px;
  border-top: 1px solid #fff;
  border-bottom: 1px solid #808080;
  background: #d4d0c8;
}
.actions button {
  justify-content: space-between;
  width: 100%;
  border-right: 1px solid #d4d0c8;
}
.grouphead {
  height: 25px;
  padding: 0 7px;
  background: linear-gradient(#a6caf0, #0a246a);
  color: #fff;
  font-size: 13px;
  font-weight: 700;
}
.more {
  height: 24px;
  margin-bottom: 5px;
  padding: 0 8px 0 30px;
}
.status {
  display: grid;
  grid-template-columns: 1fr 131px 83px;
  gap: 2px;
  margin-top: 3px;
  padding: 0 2px 1px 0;
}
.status span {
  height: 16px;
  border: 1px solid;
  border-color: #808080 #fff #fff #808080;
}
.dialog {
  position: absolute;
  top: 65px;
  left: 380px;
  box-sizing: border-box;
  width: 404px;
  padding: 1px 2px 8px;
  border: 1px solid;
  border-color: #d4d0c8 #404040 #404040 #d4d0c8;
  background: #d4d0c8;
  box-shadow: inset 1px 1px #fff, inset -1px -1px #808080;
}
.dialogbar {
  display: flex;
  align-items: center;
  justify-content: space-between;
  height: 18px;
  padding: 0 2px;
  background: linear-gradient(90deg, #0a246a, #a6caf0);
  color: #fff;
}
.tabs {
  display: flex;
  align-items: flex-end;
  height: 20px;
  padding: 7px 8px 0;
}
.tabs button {
  justify-content: flex-start;
  min-width: 48px;
  height: 18px;
  padding: 2px 6px 0 5px;
  border: 1px solid;
  border-color: #fff #404040 transparent #fff;
  border-bottom: 0;
  border-radius: 2px 2px 0 0;
  box-shadow: inset -1px 0 #808080;
}
.tabs .active {
  position: relative;
  height: 21px;
  margin: 0 -2px -1px;
  padding: 0 6px 0 7px;
  background: #d4d0c8;
}
.page {
  box-sizing: border-box;
  min-height: 360px;
  margin: 0 6px;
  padding: 22px 27px 0;
  border: 1px solid;
  border-color: #fff #404040 #404040 #fff;
  box-shadow: inset -1px -1px #808080;
  line-height: 12px;
}
.page p {
  margin: 0 3px 34px;
  font-size: 12px;
}
.option {
  display: flex;
  align-items: center;
  gap: 5px;
  margin-bottom: 16px;
}
.option:nth-of-type(3) {
  margin-top: 24px;
}
.option input {
  flex: none;
  box-sizing: border-box;
  width: 13px;
  height: 13px;
  margin: 0;
  border: 1px solid;
  border-color: #808080 #fff #fff #808080;
  background: #fff;
  box-shadow: inset 1px 1px #404040, inset -1px -1px #d4d0c8;
  appearance: none;
}
.option input:checked {
  background: #000;
}
.option label .mix {
  display: block;
}
.restore {
  width: 140px;
  height: 26px;
  margin: 90px auto 0;
}
.buttons {
  display: flex;
  justify-content: flex-end;
  gap: 6px;
  margin: 6px 6px 0;
}
.buttons button {
  width: 75px;
  height: 21px;
}
.buttons .default {
  border-color: #000;
  box-shadow: inset 1px 1px #fff, inset -1px -1px #404040, inset -2px -2px #808080;
}
.buttons button:disabled {
  color: #808080;
  text-shadow: 1px 1px #fff;
}
.mark {
  position: absolute;
  box-sizing: border-box;
  border: 5px solid #ed1c24;
  pointer-events: none;
}
.mark-node {
  top: 291px;
  left: 33px;
  width: 100px;
  height: 31px;
}
.mark-check {
  top: 280px;
  left: 402px;
  width: 37px;
  height: 39px;
}
.note {
  position: absolute;
  top: 298px;
  left: 152px;
  color: #3f48cc;
  font-size: 15px;
  line-height: 20px;
}
.taskbar {
  display: flex;
  align-items: stretch;
  box-sizing: border-box;
  height: 43px;
  padding: 2px 2px;
  border-top: 1px solid #fff;
}
.start {
  width: 47px;
  margin-right: 9px;
}
.launch {
  width: 49px;
}
.running {
  width: 48px;
  margin-left: 3px;
}
.ime {
  display: flex;
  align-items: center;
  margin: 2px 3px 2px auto;
  padding-right: 4px;
  border-right: 1px solid #808080;
  box-shadow: 1px 0 #fff;
}
.tray {
  display: flex;
  align-items: center;
  gap: 8px;
  padding: 0 1px 0 6px;
  border: 1px solid;
  border-color: #808080 #fff #fff #808080;
}
.tray time {
  display: flex;
  flex-direction: column;
  align-items: center;
  margin-left: 4px;
  font: 10px/16px 'Liberation Mono', monospace;
}
</style>
